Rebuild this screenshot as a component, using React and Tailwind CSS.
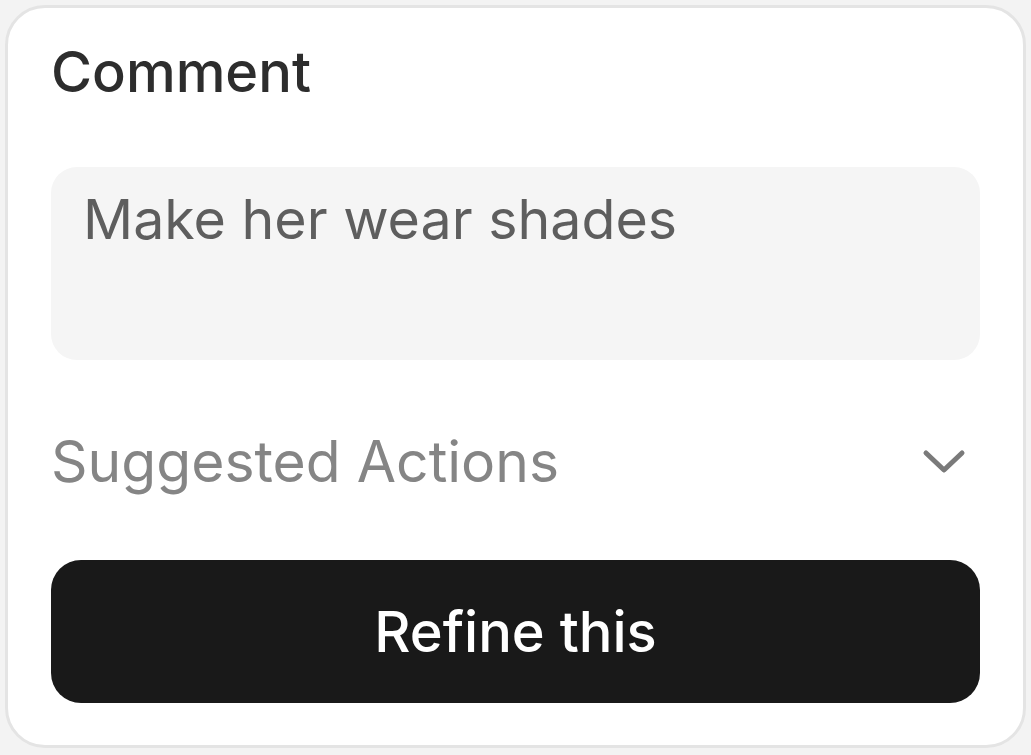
import React from 'react';

function ChevronDown() {
  return (
    <svg width="44" height="28" viewBox="0 0 44 28" fill="none">
      <path d="M4 5 L22 22 L40 5" stroke="#7a7a7a" strokeWidth="5" strokeLinecap="round" strokeLinejoin="round" />
    </svg>
  );
}

export default function App() {
  return (
    <div className="min-h-screen w-full bg-[#f3f3f3] p-[5px] pb-[7px]" style={{ fontFamily: 'Inter, "Noto Sans", sans-serif' }}>
      <div className="flex h-[743px] flex-col rounded-[40px] border-[3px] border-[#e4e4e4] bg-white px-[43px] pt-[30px]">
        <h2 className="text-[56px] leading-[68px] font-medium text-[#2d2d2d]">Comment</h2>

        {/* comment box */}
        <div className="mt-[61px] h-[193px] rounded-[26px] bg-[#f5f5f5] px-[32px] pt-[18px]">
          <p className="text-[55.5px] leading-[68px] text-[#5e5e5e]">Make her wear shades</p>
        </div>

        {/* suggested actions */}
        <div className="mt-[68px] flex items-center justify-between pr-[14px]">
          <span className="text-[57px] leading-[68px] text-[#858585]">Suggested Actions</span>
          <ChevronDown />
        </div>

        <button className="mt-[64px] flex h-[143px] w-full items-center justify-center rounded-[30px] bg-[#191919] text-[56px] font-medium text-white">
          Refine this
        </button>
      </div>
    </div>
  );
}
